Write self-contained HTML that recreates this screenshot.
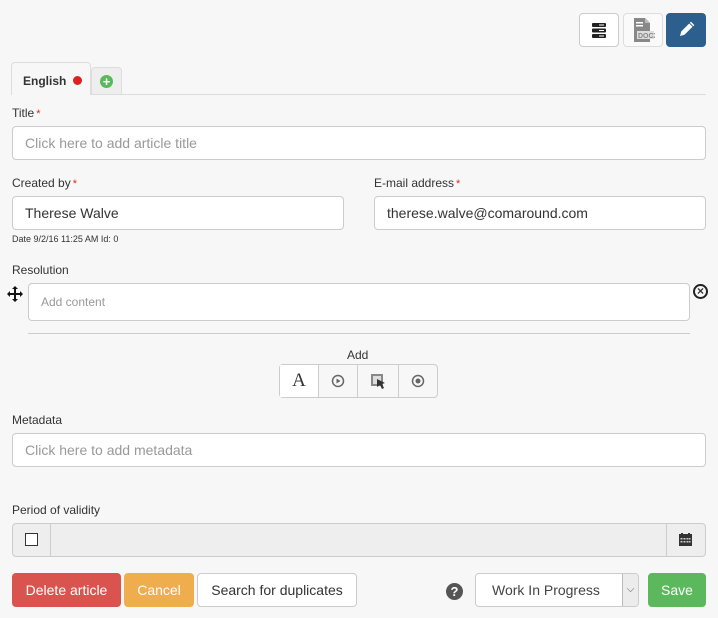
<!DOCTYPE html>
<html><head><meta charset="utf-8"><style>
*{box-sizing:border-box}
body{margin:0;width:718px;height:618px;background:#f7f7f7;font-family:"Liberation Sans",Arial,sans-serif;color:#333;position:relative;overflow:hidden}
.a{position:absolute}
.lbl{font-size:12px;color:#333}
.req{color:#e22;font-size:11px;margin-left:2px}
.in{position:absolute;background:#fff;border:1px solid #ccc;border-radius:4px;font-size:14px;padding-left:12px;display:flex;align-items:center}
.ph{color:#999}
.btn{position:absolute;border-radius:4px;font-size:14px;display:flex;align-items:center;justify-content:center}
</style></head><body>
<div class="btn" style="left:579px;top:13px;width:40px;height:34px;background:#fff;border:1px solid #ccc">
<svg width="16" height="15"><rect x="1" y="0" width="14" height="4" rx="1" fill="#222"/><rect x="1" y="5.5" width="14" height="4" rx="1" fill="#222"/><rect x="1" y="11" width="14" height="4" rx="1" fill="#222"/><rect x="8" y="1.5" width="5" height="1" fill="#fff"/><rect x="8" y="7" width="5" height="1" fill="#fff"/><rect x="8" y="12.5" width="5" height="1" fill="#fff"/></svg></div>
<div class="btn" style="left:623px;top:13px;width:40px;height:34px;background:#fafafa;border:1px solid #ddd">
<svg width="24" height="26"><path d="M3 1h11l5 5v19H3z" fill="#888"/><path d="M14 1v5h5" fill="#bbb"/><rect x="5" y="5" width="7" height="1.5" fill="#fff"/><rect x="5" y="8" width="7" height="1.5" fill="#fff"/><rect x="6" y="14" width="17" height="8" fill="#ddd"/><text x="7" y="21" font-size="7" font-weight="bold" fill="#888" font-family="Liberation Sans">DOCX</text></svg></div>
<div class="btn" style="left:666px;top:13px;width:40px;height:34px;background:#2c5f8d">
<svg width="18" height="18"><path d="M3 15l1.2-4.5 8-8 3.3 3.3-8 8z" fill="#fff"/><path d="M12.8 1.8l1.2-1 3.3 3.3-1 1.2z" fill="#fff"/></svg></div>
<div class="a" style="left:12px;top:94px;width:694px;height:1px;background:#ddd"></div>
<div class="a" style="left:11px;top:62px;width:80px;height:33px;background:#f7f7f7;border:1px solid #ddd;border-bottom:none;border-radius:4px 4px 0 0;font-size:12px;font-weight:bold;padding:11px 0 0 11px">English <span style="display:inline-block;width:9px;height:9px;border-radius:50%;background:#d9231f;margin-left:3px"></span></div>
<div class="a" style="left:91px;top:67px;width:31px;height:27px;background:#eee;border:1px solid #ddd;border-bottom:none;border-radius:4px 4px 0 0"><div class="a" style="left:8px;top:7px;width:13px;height:13px;border-radius:50%;background:#5cb85c;color:#fff;font-size:13px;font-weight:bold;line-height:13px;text-align:center">+</div></div>
<div class="a lbl" style="left:12px;top:106px">Title<span class="req">*</span></div>
<div class="in" style="left:12px;top:126px;width:694px;height:34px"><span class="ph">Click here to add article title</span></div>
<div class="a lbl" style="left:12px;top:176px">Created by<span class="req">*</span></div>
<div class="in" style="left:12px;top:196px;width:332px;height:34px">Therese Walve</div>
<div class="a lbl" style="left:374px;top:176px">E-mail address<span class="req">*</span></div>
<div class="in" style="left:374px;top:196px;width:332px;height:34px">therese.walve@comaround.com</div>
<div class="a" style="left:12px;top:234px;font-size:9px">Date 9/2/16 11:25 AM Id: 0</div>
<div class="a lbl" style="left:12px;top:263px">Resolution</div>
<svg class="a" style="left:7px;top:286px" width="16" height="16"><path d="M8 0l3 3H9v4h4V5l3 3-3 3V9H9v4h2l-3 3-3-3h2V9H3v2L0 8l3-3v2h4V3H5z" fill="#111"/></svg>
<div class="in" style="left:28px;top:283px;width:662px;height:38px;font-size:12px"><span class="ph">Add content</span></div>
<div class="a" style="left:693px;top:284px;width:15px;height:15px;border:2px solid #222;border-radius:50%;font-size:12px;font-weight:bold;line-height:10px;text-align:center">×</div>
<div class="a" style="left:28px;top:333px;width:662px;height:1px;background:#ccc"></div>
<div class="a lbl" style="left:347px;top:348px">Add</div>
<div class="a" style="left:279px;top:364px;width:159px;height:34px;border:1px solid #ccc;border-radius:4px;background:#f7f7f7;display:flex">
<div style="width:39px;background:#fff;border-right:1px solid #ccc;font-family:'Liberation Serif',serif;font-size:19px;text-align:center;line-height:32px">A</div>
<div style="width:39px;border-right:1px solid #ccc;display:flex;align-items:center;justify-content:center"><svg width="14" height="14"><circle cx="7" cy="7" r="5.5" fill="none" stroke="#666" stroke-width="1.5"/><path d="M5.5 4.5l4 2.5-4 2.5z" fill="#666"/></svg></div>
<div style="width:41px;border-right:1px solid #ccc;display:flex;align-items:center;justify-content:center"><svg width="18" height="18"><rect x="2" y="2" width="12" height="12" fill="#888"/><rect x="4" y="4" width="8" height="8" fill="#ddd"/><path d="M8 7l8 4-3 1 2 4-2 1-2-4-3 2z" fill="#333"/></svg></div>
<div style="flex:1;display:flex;align-items:center;justify-content:center"><svg width="14" height="14"><circle cx="7" cy="7" r="5.5" fill="none" stroke="#666" stroke-width="1.5"/><circle cx="7" cy="7" r="2.5" fill="#666"/></svg></div>
</div>
<div class="a lbl" style="left:12px;top:413px">Metadata</div>
<div class="in" style="left:12px;top:433px;width:694px;height:34px"><span class="ph">Click here to add metadata</span></div>
<div class="a lbl" style="left:12px;top:503px">Period of validity</div>
<div class="a" style="left:12px;top:523px;width:694px;height:34px;border:1px solid #ccc;border-radius:4px;background:#eee"></div>
<div class="a" style="left:12px;top:523px;width:39px;height:34px;border-right:1px solid #ccc"><div class="a" style="left:13px;top:10px;width:13px;height:13px;border:1px solid #333;background:#fff"></div></div>
<div class="a" style="left:666px;top:523px;width:1px;height:34px;background:#ccc"></div>
<svg class="a" style="left:679px;top:533px" width="13" height="13"><rect x="0" y="1" width="13" height="12" fill="#333"/><rect x="2" y="0" width="2" height="3" fill="#333"/><rect x="9" y="0" width="2" height="3" fill="#333"/><g fill="#ccc"><rect x="1.5" y="5" width="2" height="1.5"/><rect x="4.5" y="5" width="2" height="1.5"/><rect x="7.5" y="5" width="2" height="1.5"/><rect x="10" y="5" width="1.5" height="1.5"/><rect x="1.5" y="8" width="2" height="1.5"/><rect x="4.5" y="8" width="2" height="1.5"/><rect x="7.5" y="8" width="2" height="1.5"/><rect x="10" y="8" width="1.5" height="1.5"/></g></svg>
<div class="btn" style="left:12px;top:573px;width:109px;height:34px;background:#d9534f;color:#fff">Delete article</div>
<div class="btn" style="left:124px;top:573px;width:70px;height:34px;background:#f0ad4e;color:#fff">Cancel</div>
<div class="btn" style="left:197px;top:573px;width:160px;height:34px;background:#fff;border:1px solid #ccc;color:#333">Search for duplicates</div>
<div class="a" style="left:446px;top:583px;width:17px;height:17px;border-radius:50%;background:#555;color:#fff;font-size:13px;font-weight:bold;text-align:center;line-height:17px">?</div>
<div class="in" style="left:475px;top:573px;width:164px;height:34px;padding-left:16px;color:#444">Work In Progress</div>
<div class="a" style="left:622px;top:574px;width:16px;height:32px;background:#ececec;border-left:1px solid #bbb;border-radius:0 3px 3px 0;text-align:center;font-size:10px;color:#555;line-height:32px">⌵</div>
<div class="btn" style="left:648px;top:573px;width:58px;height:34px;background:#5cb85c;color:#fff">Save</div>
</body></html>
